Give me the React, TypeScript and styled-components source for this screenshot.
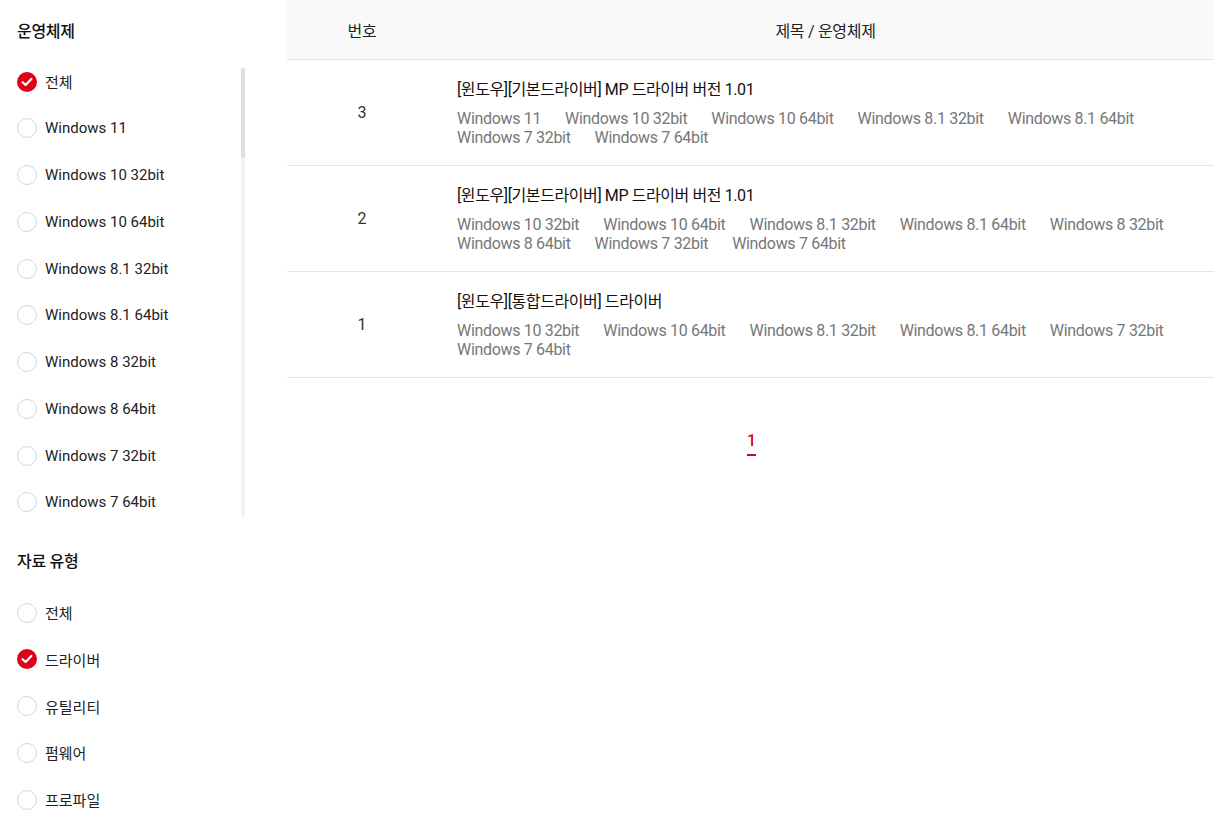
import React from "react";
import styled, { createGlobalStyle } from "styled-components";

const Global = createGlobalStyle`
  html, body { margin: 0; padding: 0; background: #fff; }
  body { font-family: Roboto, "Noto Sans CJK KR", sans-serif; color: #222; }
  * { box-sizing: border-box; }
`;

const Page = styled.div`
  display: flex;
  width: 1214px;
  height: 815px;
  overflow: hidden;
`;

const Sidebar = styled.aside`
  width: 287px;
  flex: none;
  padding: 0 0 0 17px;
`;

const Heading = styled.h3`
  margin: 0;
  height: 60px;
  display: flex;
  align-items: center;
  font-size: 16px;
  font-weight: 500;
  color: #111;
  letter-spacing: -0.3px;
  padding-bottom: 1px;
`;

const ScrollArea = styled.div`
  display: flex;
  width: 228px;
  margin-top: 8px;
  height: 449px;
`;

const OptionList = styled.ul`
  list-style: none;
  margin: 0;
  padding: 0;
  flex: 1;
  display: flex;
  flex-direction: column;
  row-gap: 18.75px;
`;

const Track = styled.div`
  width: 4px;
  flex: none;
  background: #f3f3f3;
  border-radius: 2px;
  display: flex;
  flex-direction: column;
`;

const Thumb = styled.div`
  height: 90px;
  background: #dedede;
  border-radius: 2px;
`;

const Option = styled.li`
  height: 28px;
  flex: none;
  display: flex;
  align-items: center;
  gap: 8px;
  font-size: 15px;
  color: #222;
  padding-bottom: 1px;
`;

const TypeList = styled(OptionList)`
  margin-top: 9px;
`;

const Circle = styled.span<{ $on?: boolean }>`
  width: 20px;
  height: 20px;
  border-radius: 50%;
  flex: none;
  display: flex;
  align-items: center;
  justify-content: center;
  background: ${(p) => (p.$on ? "#de0018" : "#fff")};
  border: ${(p) => (p.$on ? "none" : "1px solid #d6d6d6")};
`;

const Section = styled.div<{ $gap?: number }>`
  margin-top: ${(p) => p.$gap ?? 0}px;
`;

const Main = styled.main`
  flex: 1;
  display: flex;
  flex-direction: column;
`;

const Table = styled.div`
  display: flex;
  flex-direction: column;
`;

const HeadRow = styled.div`
  display: grid;
  grid-template-columns: 150px 1fr;
  height: 60px;
  background: #f9f9f9;
  border-bottom: 1px solid #e5e5e5;
  align-items: center;
  font-size: 16px;
  color: #222;
  letter-spacing: -0.3px;
`;

const HeadCell = styled.div`
  text-align: center;
`;

const Row = styled.div`
  display: grid;
  grid-template-columns: 150px 1fr;
  height: 106px;
  border-bottom: 1px solid #e5e5e5;
  align-items: center;
`;

const Num = styled.div`
  text-align: center;
  font-size: 16px;
  color: #333;
`;

const Body = styled.div`
  padding: 0 20px 0 20px;
  display: flex;
  flex-direction: column;
  gap: 9px;
  margin-top: 1px;
`;

const Title = styled.div`
  font-size: 16px;
  color: #111;
  letter-spacing: -0.4px;
  line-height: 20px;
`;

const OsList = styled.div`
  display: flex;
  flex-wrap: wrap;
  column-gap: 24px;
  font-size: 16px;
  line-height: 19px;
  color: #777;
  letter-spacing: -0.32px;
`;

const Pager = styled.div`
  display: flex;
  justify-content: center;
  padding-top: 54px;
  padding-left: 2px;
`;

const PageNum = styled.span`
  color: #de0018;
  font-size: 16px;
  font-weight: 500;
  padding-bottom: 4px;
  border-bottom: 2px solid #de0018;
  width: 9px;
  text-align: center;
  line-height: 18px;
`;

const Check = () => (
  <svg width="12" height="10" viewBox="0 0 12 10" fill="none">
    <path d="M1.6 5.2 L4.6 8 L10.4 2" stroke="#fff" strokeWidth="2.2" strokeLinecap="round" strokeLinejoin="round" />
  </svg>
);

const osOptions = [
  "전체",
  "Windows 11",
  "Windows 10 32bit",
  "Windows 10 64bit",
  "Windows 8.1 32bit",
  "Windows 8.1 64bit",
  "Windows 8 32bit",
  "Windows 8 64bit",
  "Windows 7 32bit",
  "Windows 7 64bit",
];

const typeOptions = ["전체", "드라이버", "유틸리티", "펌웨어", "프로파일"];

const rows = [
  {
    no: 3,
    title: "[윈도우][기본드라이버] MP 드라이버 버전 1.01",
    os: ["Windows 11", "Windows 10 32bit", "Windows 10 64bit", "Windows 8.1 32bit", "Windows 8.1 64bit", "Windows 7 32bit", "Windows 7 64bit"],
  },
  {
    no: 2,
    title: "[윈도우][기본드라이버] MP 드라이버 버전 1.01",
    os: ["Windows 10 32bit", "Windows 10 64bit", "Windows 8.1 32bit", "Windows 8.1 64bit", "Windows 8 32bit", "Windows 8 64bit", "Windows 7 32bit", "Windows 7 64bit"],
  },
  {
    no: 1,
    title: "[윈도우][통합드라이버] 드라이버",
    os: ["Windows 10 32bit", "Windows 10 64bit", "Windows 8.1 32bit", "Windows 8.1 64bit", "Windows 7 32bit", "Windows 7 64bit"],
  },
];

export default function App() {
  return (
    <Page>
      <Global />
      <Sidebar>
        <Section>
          <Heading>운영체제</Heading>
          <ScrollArea>
            <OptionList>
              {osOptions.map((o, i) => (
                <Option key={o}>
                  <Circle $on={i === 0}>{i === 0 && <Check />}</Circle>
                  {o}
                </Option>
              ))}
            </OptionList>
            <Track>
              <Thumb />
            </Track>
          </ScrollArea>
        </Section>
        <Section $gap={13}>
          <Heading>자료 유형</Heading>
          <TypeList>
            {typeOptions.map((o, i) => (
              <Option key={o}>
                <Circle $on={i === 1}>{i === 1 && <Check />}</Circle>
                {o}
              </Option>
            ))}
          </TypeList>
        </Section>
      </Sidebar>
      <Main>
        <Table>
          <HeadRow>
            <HeadCell>번호</HeadCell>
            <HeadCell>제목 / 운영체제</HeadCell>
          </HeadRow>
          {rows.map((r) => (
            <Row key={r.no}>
              <Num>{r.no}</Num>
              <Body>
                <Title>{r.title}</Title>
                <OsList>
                  {r.os.map((o) => (
                    <span key={o}>{o}</span>
                  ))}
                </OsList>
              </Body>
            </Row>
          ))}
        </Table>
        <Pager>
          <PageNum>1</PageNum>
        </Pager>
      </Main>
    </Page>
  );
}
